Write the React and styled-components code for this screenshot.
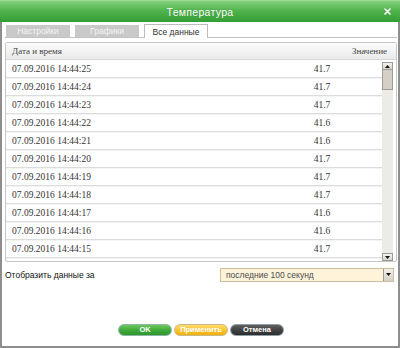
import React from 'react';
import styled, { createGlobalStyle } from 'styled-components';

const GlobalStyle = createGlobalStyle`
  html, body {
    margin: 0;
    padding: 0;
    background: #ffffff;
  }
  * {
    box-sizing: border-box;
  }
`;

const Window = styled.div`
  width: 400px;
  height: 348px;
  display: flex;
  flex-direction: column;
  font-family: "Liberation Sans", Arial, sans-serif;
  background: #fff;
  overflow: hidden;
`;

const TitleBar = styled.div`
  height: 22px;
  flex: none;
  display: grid;
  grid-template-columns: 1fr auto 1fr;
  align-items: center;
  background: linear-gradient(#84d07c 0%, #52b44e 45%, #339d35 100%);
  border-top: 1px solid #9ada92;
  color: #fff;
`;

const Title = styled.div`
  grid-column: 2;
  font-size: 10.5px;
  letter-spacing: 0.3px;
  text-shadow: 0 0 1px rgba(0, 80, 0, 0.3);
`;

const Close = styled.button`
  grid-column: 3;
  justify-self: end;
  margin-right: 9px;
  width: 8px;
  height: 8px;
  padding: 0;
  border: none;
  background: none;
  display: flex;
  align-items: center;
  justify-content: center;
  cursor: pointer;
`;

const Body = styled.div`
  flex: 1;
  display: flex;
  flex-direction: column;
  border: 2px solid #8e8e8e;
  border-top: none;
  padding: 0 1px 10px 3px;
`;

const Tabs = styled.div`
  height: 15px;
  margin-top: 1px;
  display: flex;
  align-items: flex-end;
  gap: 5px;
  padding-left: 1px;
  border-bottom: 1px solid #c2c2c2;
`;

const Tab = styled.div`
  width: 64px;
  height: ${(p) => (p.$active ? '14px' : '12px')};
  margin-bottom: ${(p) => (p.$active ? '-1px' : '0')};
  display: flex;
  align-items: center;
  justify-content: center;
  font-size: 8.5px;
  color: ${(p) => (p.$active ? '#333' : '#f4f4f4')};
  background: ${(p) => (p.$active ? '#fff' : '#c9c9c9')};
  border: ${(p) => (p.$active ? '1px solid #bdbdbd' : 'none')};
  border-bottom: none;
`;

const Panel = styled.div`
  margin-top: 4px;
  height: 220px;
  display: flex;
  flex-direction: column;
  border: 1px solid #c6c6c6;
  border-radius: 2px;
  font-family: "Liberation Serif", "Times New Roman", serif;
  font-size: 9.5px;
  color: #333;
`;

const Header = styled.div`
  height: 17px;
  flex: none;
  display: flex;
  align-items: center;
  justify-content: space-between;
  padding: 0 9px 0 6px;
  background: linear-gradient(#fbfbfb, #ebebeb);
  border-bottom: 1px solid #d6d6d6;
  color: #444;
  font-size: 9px;
`;

const ListArea = styled.div`
  flex: 1;
  display: flex;
  overflow: hidden;
  padding-right: 3px;
`;

const Rows = styled.div`
  flex: 1;
  overflow: hidden;
`;

const Row = styled.div`
  height: 18px;
  display: grid;
  grid-template-columns: 1fr 120px;
  align-items: center;
  border-bottom: 1px solid #dcdcdc;
  box-shadow: 0 1px 0 #f4f4f4;
  padding-left: 6px;
`;

const Value = styled.span`
  text-align: center;
`;

const Scrollbar = styled.div`
  width: 11px;
  flex: none;
  margin-top: 2px;
  display: flex;
  flex-direction: column;
  background: #ecebe6;
`;

const ScrollButton = styled.div`
  height: 8px;
  flex: none;
  display: flex;
  align-items: center;
  justify-content: center;
  background: linear-gradient(#f4f3ef, #d8d5cc);
  border: 1px solid #9c9a94;
`;

const Thumb = styled.div`
  height: 20px;
  flex: none;
  background: #d4d0c8;
  border: 1px solid #a09c94;
  border-top: none;
`;

const Track = styled.div`
  flex: 1;
`;

const FilterRow = styled.div`
  margin-top: 5px;
  height: 15px;
  display: flex;
  align-items: center;
  justify-content: space-between;
  padding-right: 3px;
  font-size: 8.5px;
  color: #111;
`;

const Select = styled.div`
  width: 174px;
  height: 14px;
  display: flex;
  align-items: center;
  justify-content: space-between;
  padding-left: 5px;
  background: #fff4da;
  border: 1px solid #cdbf9e;
  color: #4a4a4a;
  font-size: 8.5px;
`;

const SelectButton = styled.div`
  width: 10px;
  height: 12px;
  display: flex;
  align-items: center;
  justify-content: center;
  background: linear-gradient(#f2f1ec, #d3d0c8);
  border-left: 1px solid #9c9a94;
`;

const Spacer = styled.div`
  flex: 1;
`;

const ButtonRow = styled.div`
  display: flex;
  justify-content: center;
  gap: 2px;
`;

const palettes = {
  green: { bg: 'linear-gradient(#6cc85a, #3ea93a 55%, #2f962e)', border: '#8fb5a6' },
  yellow: { bg: 'linear-gradient(#ffdc6a, #f8c22c 55%, #f0b010)', border: '#c9b98a' },
  dark: { bg: 'linear-gradient(#606060, #404040 55%, #2c2c2c)', border: '#8fa0a8' },
};

const Button = styled.button`
  width: 54px;
  height: 12px;
  padding: 0;
  border-radius: 6px;
  border: 1px solid ${(p) => palettes[p.$tone].border};
  background: ${(p) => palettes[p.$tone].bg};
  color: #fff;
  font-family: "Liberation Sans", Arial, sans-serif;
  font-weight: bold;
  font-size: 7.5px;
  line-height: 10px;
  cursor: pointer;
`;

const rows = [
  ['07.09.2016 14:44:25', '41.7'],
  ['07.09.2016 14:44:24', '41.7'],
  ['07.09.2016 14:44:23', '41.7'],
  ['07.09.2016 14:44:22', '41.6'],
  ['07.09.2016 14:44:21', '41.6'],
  ['07.09.2016 14:44:20', '41.7'],
  ['07.09.2016 14:44:19', '41.7'],
  ['07.09.2016 14:44:18', '41.7'],
  ['07.09.2016 14:44:17', '41.6'],
  ['07.09.2016 14:44:16', '41.6'],
  ['07.09.2016 14:44:15', '41.7'],
];

const Arrow = ({ up }) => (
  <svg width="5" height="3" viewBox="0 0 5 3">
    <path d={up ? 'M0 3 L2.5 0 L5 3 Z' : 'M0 0 L2.5 3 L5 0 Z'} fill="#111" />
  </svg>
);

export default function App() {
  return (
    <Window>
      <GlobalStyle />
      <TitleBar>
        <Title>Температура</Title>
        <Close aria-label="Закрыть">
          <svg width="7" height="7" viewBox="0 0 7 7">
            <path d="M1 1 L6 6 M6 1 L1 6" stroke="#fff" strokeWidth="1.6" strokeLinecap="round" />
          </svg>
        </Close>
      </TitleBar>
      <Body>
        <Tabs>
          <Tab>Настройки</Tab>
          <Tab>Графики</Tab>
          <Tab $active>Все данные</Tab>
        </Tabs>
        <Panel>
          <Header>
            <span>Дата и время</span>
            <span>Значение</span>
          </Header>
          <ListArea>
            <Rows>
              {rows.map(([date, value]) => (
                <Row key={date}>
                  <span>{date}</span>
                  <Value>{value}</Value>
                </Row>
              ))}
            </Rows>
            <Scrollbar>
              <ScrollButton>
                <Arrow up />
              </ScrollButton>
              <Thumb />
              <Track />
              <ScrollButton>
                <Arrow />
              </ScrollButton>
            </Scrollbar>
          </ListArea>
        </Panel>
        <FilterRow>
          <span>Отобразить данные за</span>
          <Select>
            <span>последние 100 секунд</span>
            <SelectButton>
              <Arrow />
            </SelectButton>
          </Select>
        </FilterRow>
        <Spacer />
        <ButtonRow>
          <Button $tone="green">OK</Button>
          <Button $tone="yellow">Применить</Button>
          <Button $tone="dark">Отмена</Button>
        </ButtonRow>
      </Body>
    </Window>
  );
}
